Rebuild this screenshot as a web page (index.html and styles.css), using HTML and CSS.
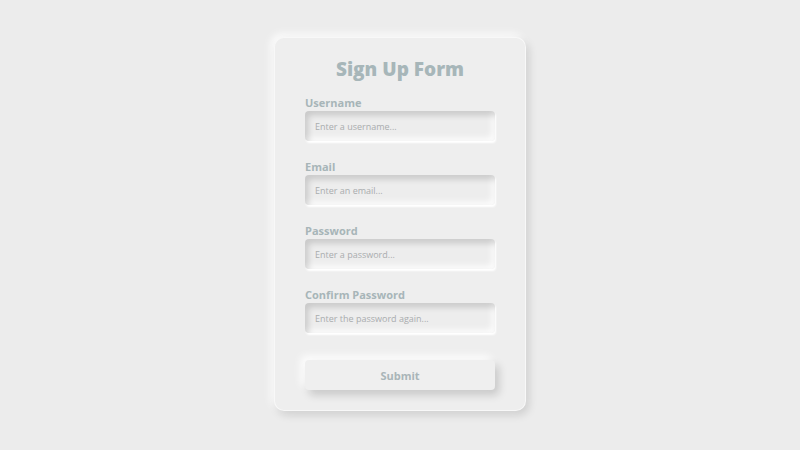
FILE: index.html
```html
<!DOCTYPE html>
<html lang="en">
<head>
<meta charset="utf-8">
<title>Sign Up Form</title>
<link rel="stylesheet" href="styles.css">
</head>
<body>
<main class="page">
  <form class="card">
    <h1 class="title">Sign Up Form</h1>
    <div class="field">
      <label class="label" for="u">Username</label>
      <input class="input" id="u" type="text" placeholder="Enter a username...">
    </div>
    <div class="field">
      <label class="label" for="e">Email</label>
      <input class="input" id="e" type="email" placeholder="Enter an email...">
    </div>
    <div class="field">
      <label class="label" for="p">Password</label>
      <input class="input" id="p" type="password" placeholder="Enter a password...">
    </div>
    <div class="field">
      <label class="label" for="c">Confirm Password</label>
      <input class="input" id="c" type="password" placeholder="Enter the password again...">
    </div>
    <button class="submit" type="button">Submit</button>
  </form>
</main>
</body>
</html>
```
FILE: styles.css
```css
* { box-sizing: border-box; }
html, body { margin: 0; padding: 0; }
body {
  background: #ececec;
  font-family: "Open Sans", "DejaVu Sans", sans-serif;
  width: 800px;
  height: 450px;
  overflow: hidden;
}
.page {
  display: flex;
  justify-content: center;
  padding-top: 37px;
}
.card {
  width: 252px;
  height: 374px;
  background: #eeeeee;
  border-radius: 10px;
  padding: 19px 30px 19px;
  display: flex;
  flex-direction: column;
  box-shadow: 3px 4px 8px rgba(0,0,0,0.13), -3px -3px 8px rgba(255,255,255,0.95);
  border: 1px solid rgba(255,255,255,0.6);
}
.title {
  margin: 0 0 15px;
  font-size: 19px;
  line-height: 24px;
  font-weight: 800;
  text-align: center;
  color: #a7b6b9;
}
.field {
  display: flex;
  flex-direction: column;
  margin-bottom: 19px;
}
.label {
  font-size: 11px;
  line-height: 14px;
  font-weight: 700;
  color: #a7b5b8;
  margin-bottom: 1px;
}
.input {
  height: 30px;
  width: 100%;
  border: none;
  outline: none;
  border-radius: 4px;
  background: #ededed;
  padding: 0 10px;
  font-family: inherit;
  font-size: 9px;
  color: #999;
  box-shadow: inset 3px 4px 6px rgba(0,0,0,0.16), inset -3px -3px 6px rgba(255,255,255,0.9), 1px 2px 2px #ffffff;
}
.input::placeholder { color: #a9acae; }
.submit {
  margin-top: 8px;
  height: 30px;
  width: 100%;
  border: none;
  border-radius: 4px;
  background: #efefef;
  font-family: inherit;
  font-size: 11px;
  font-weight: 700;
  color: #a9b5b8;
  box-shadow: 4px 5px 8px rgba(0,0,0,0.16), -4px -4px 8px rgba(255,255,255,0.95);
}
```
